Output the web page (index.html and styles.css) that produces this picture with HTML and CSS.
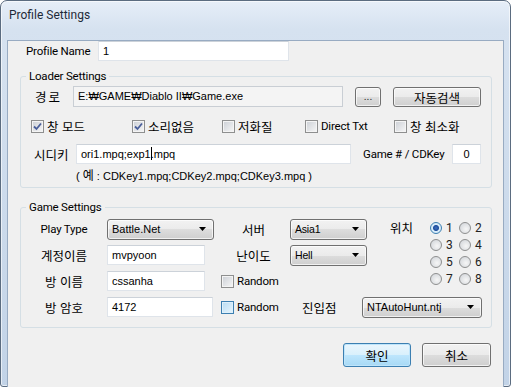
FILE: index.html
```html
<!DOCTYPE html>
<html lang="ko">
<head>
    <meta charset="UTF-8">
    <title>Profile Settings</title>
    <link rel="stylesheet" href="styles.css">
</head>
<body>
    <div class="window">
        <div class="titlebar">Profile Settings</div>
        <div class="client">
            <div class="name-row">
                <span class="name-label">Profile Name</span>
                <div class="field name-field">1</div>
            </div>

            <div class="group loader">
                <span class="group-title">Loader Settings</span>
                <div class="row path-row">
                    <span class="ko path-label">경로</span>
                    <div class="path">E:₩GAME₩Diablo II₩Game.exe</div>
                    <button class="btn dots">...</button>
                    <button class="btn ko auto">자동검색</button>
                </div>
                <div class="row checks">
                    <label class="check c1"><span class="box on"><svg viewBox="0 0 9 9"><path d="M1 4.5 L3.5 7 L8 1.5"/></svg></span><span class="ko">창 모드</span></label>
                    <label class="check c2"><span class="box on"><svg viewBox="0 0 9 9"><path d="M1 4.5 L3.5 7 L8 1.5"/></svg></span><span class="ko">소리없음</span></label>
                    <label class="check c3"><span class="box"></span><span class="ko">저화질</span></label>
                    <label class="check c4"><span class="box"></span><span>Direct Txt</span></label>
                    <label class="check"><span class="box"></span><span class="ko">창 최소화</span></label>
                </div>
                <div class="row cd-row">
                    <span class="ko cd-label">시디키</span>
                    <div class="field cd-field">ori1.mpq;exp1<span class="caret"></span>.mpq</div>
                    <span class="cd-num-label">Game # / CDKey</span>
                    <div class="field cd-num">0</div>
                </div>
                <div class="hint">( <span class="ko">예</span> : CDKey1.mpq;CDKey2.mpq;CDKey3.mpq )</div>
            </div>

            <div class="group game">
                <span class="group-title">Game Settings</span>
                <div class="game-top">
                    <div class="game-rows">
                        <div class="grow">
                            <span class="glabel">Play Type</span>
                            <div class="combo play"><span>Battle.Net</span><svg class="arrow" viewBox="0 0 7 4"><path d="M0 0 H7 L3.5 4 Z"/></svg></div>
                            <span class="ko slabel s1">서버</span>
                            <div class="combo small"><span class="narrow">Asia1</span><svg class="arrow" viewBox="0 0 7 4"><path d="M0 0 H7 L3.5 4 Z"/></svg></div>
                        </div>
                        <div class="grow">
                            <span class="ko glabel">계정이름</span>
                            <div class="field gfield">mvpyoon</div>
                            <span class="ko slabel s2">난이도</span>
                            <div class="combo small"><span class="narrow">Hell</span><svg class="arrow" viewBox="0 0 7 4"><path d="M0 0 H7 L3.5 4 Z"/></svg></div>
                        </div>
                        <div class="grow">
                            <span class="ko glabel">방 이름</span>
                            <div class="field gfield">cssanha</div>
                            <label class="check rnd1"><span class="box"></span><span>Random</span></label>
                        </div>
                    </div>
                    <div class="pos">
                        <span class="ko pos-label">위치</span>
                        <div class="radios">
                            <label class="radio"><span class="dot on"></span>1</label>
                            <label class="radio"><span class="dot"></span>2</label>
                            <label class="radio"><span class="dot"></span>3</label>
                            <label class="radio"><span class="dot"></span>4</label>
                            <label class="radio"><span class="dot"></span>5</label>
                            <label class="radio"><span class="dot"></span>6</label>
                            <label class="radio"><span class="dot"></span>7</label>
                            <label class="radio"><span class="dot"></span>8</label>
                        </div>
                    </div>
                </div>
                <div class="grow">
                    <span class="ko glabel">방 암호</span>
                    <div class="field gfield wide">4172</div>
                    <label class="check rnd2"><span class="box hot"></span><span>Random</span></label>
                    <span class="ko entry-label">진입점</span>
                    <div class="combo entry"><span>NTAutoHunt.ntj</span><svg class="arrow" viewBox="0 0 7 4"><path d="M0 0 H7 L3.5 4 Z"/></svg></div>
                </div>
            </div>

            <div class="actions">
                <button class="btn ko ok">확인</button>
                <button class="btn ko cancel">취소</button>
            </div>
        </div>
    </div>
</body>
</html>
```

FILE: styles.css
```css
* {
    box-sizing: border-box;
}
body {
    margin: 0;
    background: #fff;
    font-family: Roboto, "Noto Sans CJK KR", sans-serif;
    font-size: 11.5px;
    letter-spacing: -0.2px;
    color: #000;
    white-space: nowrap;
}
.ko {
    font-family: "Noto Sans CJK KR", sans-serif;
    font-size: 12.5px;
    letter-spacing: 0;
}
.window {
    width: 511px;
    height: 387px;
    padding: 0 7px 8px;
    border: 1px solid #5b6c80;
    border-radius: 7px 7px 3px 3px;
    background: linear-gradient(#e6eef8, #d6e2f0 28px, #c2d3e7);
    box-shadow: inset 0 0 0 1px rgba(255, 255, 255, 0.6);
}
.titlebar {
    height: 28px;
    line-height: 28px;
    padding-left: 1px;
    font-size: 12px;
    letter-spacing: 0;
    color: #1e2a38;
}
.client {
    height: 349px;
    background: #f0f0f0;
    box-shadow: 0 0 0 1px #98abc2;
}
.name-row,
.row,
.grow {
    display: flex;
    align-items: center;
}
.name-row {
    height: 20px;
    margin-top: 12px;
}
.name-label {
    margin-left: 18px;
    width: 72px;
}
.field,
.path,
.combo,
.hint {
    font-family: "Liberation Sans", "Noto Sans CJK KR", sans-serif;
    font-size: 11px;
    letter-spacing: 0;
}
.field {
    height: 20px;
    line-height: 18px;
    padding: 0 4px;
    background: #fff;
    border: 1px solid #dfe4ea;
    border-top-color: #ccd2d9;
}
.name-field {
    width: 191px;
}
.group {
    position: relative;
    margin: 15px 11px 0 12px;
    border: 1px solid #d5dfe5;
    border-radius: 3px;
}
.group-title {
    position: absolute;
    top: -9px;
    left: 5px;
    padding: 0 3px;
    line-height: 16px;
    background: #f0f0f0;
}
.path-row {
    height: 21px;
    margin-top: 9px;
}
.path-label {
    margin-left: 14px;
    width: 38px;
    letter-spacing: 2px;
}
.path {
    width: 270px;
    height: 21px;
    line-height: 19px;
    padding-left: 4px;
    background: #f4f4f4;
    border: 1px solid #c9ced4;
}
.btn {
    height: 20px;
    padding: 0;
    font-family: inherit;
    font-size: 11px;
    border: 1px solid #707070;
    border-radius: 3px;
    background: linear-gradient(#f2f2f2, #ebebeb 50%, #dddddd 50%, #cfcfcf);
    box-shadow: inset 0 0 0 1px rgba(255, 255, 255, 0.7);
    color: #000;
}
.btn.ko {
    font-family: "Noto Sans CJK KR", sans-serif;
    font-size: 12.5px;
}
.dots {
    margin-left: 12px;
    width: 26px;
    color: #333;
}
.auto {
    margin-left: 12px;
    width: 88px;
}
.checks {
    height: 18px;
    margin-top: 10px;
}
.check {
    display: flex;
    align-items: center;
    gap: 3px;
}
.c1 {
    margin-left: 10px;
    width: 101px;
}
.c2 {
    width: 90px;
}
.c3 {
    width: 83px;
}
.c4 {
    width: 89px;
}
.box {
    flex: none;
    display: flex;
    align-items: center;
    justify-content: center;
    width: 13px;
    height: 13px;
    border: 1px solid #8e8f8f;
    background: linear-gradient(135deg, #cbcfd5, #f7f7f7);
    box-shadow: inset 0 0 0 1px #f4f4f4;
}
.box svg {
    width: 9px;
    height: 9px;
    fill: none;
    stroke: #4a5f9a;
    stroke-width: 1.8;
}
.box.hot {
    border-color: #3c7fb1;
    background: linear-gradient(135deg, #b7dcf3, #e8f5fd);
    box-shadow: inset 0 0 0 1px #def0fb;
}
.cd-row {
    height: 20px;
    margin-top: 9px;
}
.cd-label {
    margin-left: 13px;
    width: 42px;
}
.cd-field {
    width: 275px;
}
.caret {
    display: inline-block;
    width: 1px;
    height: 13px;
    margin-right: -1px;
    vertical-align: -2px;
    background: #000;
}
.cd-num-label {
    margin-left: 12px;
    width: 89px;
}
.cd-num {
    width: 29px;
    text-align: center;
}
.hint {
    margin: 4px 0 0 55px;
    padding-bottom: 4px;
    line-height: 14px;
}
.hint .ko {
    font-size: 12px;
}
.game {
    margin-top: 19px;
    padding: 8px 0 7px;
}
.game-top {
    display: flex;
}
.game-rows {
    width: 346px;
}
.grow {
    height: 26px;
}
.glabel {
    margin-left: 7px;
    width: 72px;
    text-align: center;
}
.combo {
    display: flex;
    align-items: center;
    justify-content: space-between;
    height: 21px;
    margin-left: 7px;
    padding: 0 7px 0 4px;
    border: 1px solid #707070;
    border-radius: 3px;
    background: linear-gradient(#f2f2f2, #ebebeb 50%, #dddddd 50%, #cfcfcf);
    box-shadow: inset 0 0 0 1px rgba(255, 255, 255, 0.7);
}
.arrow {
    width: 7px;
    height: 4px;
    fill: #000;
}
.narrow {
    font-size: 10.5px;
    letter-spacing: -0.2px;
}
.play {
    width: 107px;
}
.gfield {
    width: 98px;
    margin-left: 7px;
}
.gfield.wide {
    width: 106px;
}
.slabel {
    width: 37px;
    text-align: center;
}
.s1 {
    margin-left: 21px;
}
.s2 {
    margin-left: 30px;
}
.small {
    width: 77px;
    margin-left: 18px;
}
.rnd1 {
    margin-left: 16px;
}
.rnd2 {
    margin-left: 8px;
    width: 81px;
}
.entry-label {
    width: 60px;
}
.entry {
    width: 120px;
    margin-left: 0;
}
.pos {
    display: flex;
    margin-left: 23px;
    padding-top: 3px;
}
.pos-label {
    width: 40px;
    line-height: 17px;
}
.radios {
    display: grid;
    grid-template-columns: 29px 29px;
    grid-auto-rows: 17px;
}
.radio {
    display: flex;
    align-items: center;
    gap: 4px;
    color: #222;
    font-size: 12px;
}
.dot {
    width: 12px;
    height: 12px;
    border: 1px solid #8e8f8f;
    border-radius: 50%;
    background: radial-gradient(circle at 60% 60%, #f6f6f6, #cdd1d6);
}
.dot.on {
    border-color: #3c7fb1;
    background: radial-gradient(circle, #3e6fbf 0, #1f4d9c 2.5px, #d8ecf9 3.5px, #d8ecf9 100%);
}
.actions {
    display: flex;
    justify-content: flex-end;
    gap: 11px;
    margin: 15px 12px 0 0;
}
.ok,
.cancel {
    height: 24px;
}
.ok {
    width: 68px;
    border-color: #3c7fb1;
    background: linear-gradient(#eaf6fd, #d9f0fc 50%, #bee6fd 50%, #a7d9f5);
    box-shadow: inset 0 0 0 1px #bfe5fb;
}
.cancel {
    width: 69px;
}
```
